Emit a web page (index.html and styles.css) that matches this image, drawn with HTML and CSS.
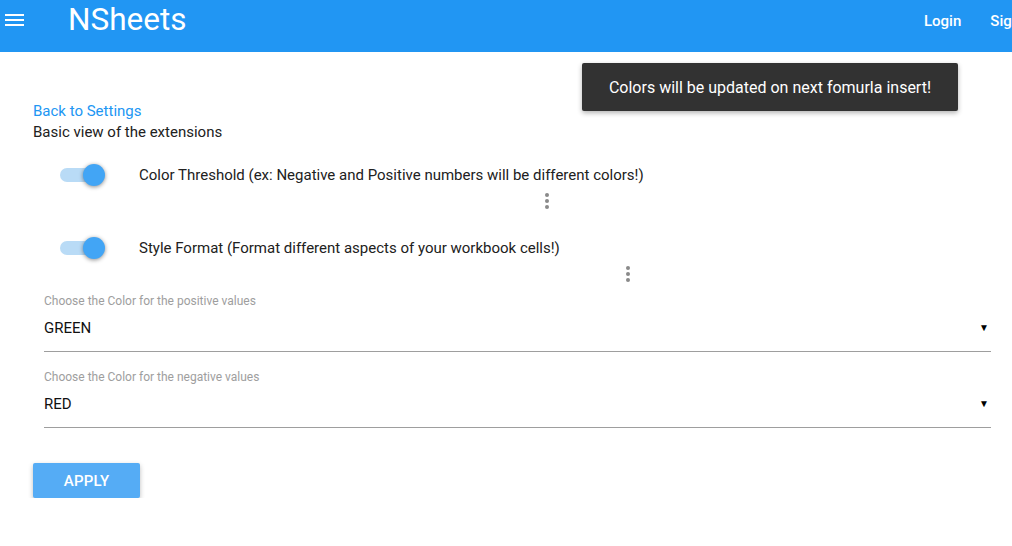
FILE: index.html
```html
<!DOCTYPE html>
<html>
<head>
<meta charset="utf-8">
<link rel="stylesheet" href="styles.css">
</head>
<body>
<header class="topbar">
  <div class="menu-btn" aria-label="menu">
    <svg width="19" height="14" viewBox="0 0 19 14"><rect x="0" y="1" width="19" height="2" fill="#fff"/><rect x="0" y="6" width="19" height="2" fill="#fff"/><rect x="0" y="11" width="19" height="2" fill="#fff"/></svg>
  </div>
  <div class="brand">NSheets</div>
  <nav class="nav">
    <a class="nav-link">Login</a>
    <a class="nav-link">Sign up</a>
  </nav>
</header>

<div class="toast">Colors will be updated on next fomurla insert!</div>

<main class="content">
  <a class="back-link">Back to Settings</a>
  <p class="subtitle">Basic view of the extensions</p>

  <div class="ext-row">
    <span class="switch"><span class="track"></span><span class="thumb"></span></span>
    <span class="ext-label">Color Threshold (ex: Negative and Positive numbers will be different colors!)</span>
  </div>
  <div class="dots-row dots-a"><span class="dots"><i></i><i></i><i></i></span></div>

  <div class="ext-row">
    <span class="switch"><span class="track"></span><span class="thumb"></span></span>
    <span class="ext-label">Style Format (Format different aspects of your workbook cells!)</span>
  </div>
  <div class="dots-row dots-b"><span class="dots"><i></i><i></i><i></i></span></div>

  <div class="field">
    <label class="field-label">Choose the Color for the positive values</label>
    <div class="select"><span>GREEN</span><span class="caret">▼</span></div>
  </div>
  <div class="field">
    <label class="field-label">Choose the Color for the negative values</label>
    <div class="select"><span>RED</span><span class="caret">▼</span></div>
  </div>

  <button class="apply">APPLY</button>
</main>
</body>
</html>
```
FILE: styles.css
```css
html, body {
  margin: 0;
  padding: 0;
  background: #fff;
  font-family: Roboto, "Liberation Sans", Arial, sans-serif;
  color: #212121;
  overflow: hidden;
}
.topbar {
  height: 52px;
  background: #2196f3;
  display: flex;
  align-items: center;
  color: #fff;
  white-space: nowrap;
  overflow: hidden;
}
.menu-btn {
  flex: none;
  width: 19px;
  height: 14px;
  margin-left: 5px;
  margin-top: -12px;
  display: flex;
}
.brand {
  flex: none;
  width: 856px;
  margin-left: 44px;
  font-size: 31.5px;
  line-height: 1;
  margin-top: -12px;
}
.nav {
  flex: none;
  display: flex;
  gap: 29px;
  margin-top: -10px;
}
.nav-link {
  font-size: 15px;
  font-weight: 500;
  color: #fff;
}
.toast {
  position: absolute;
  left: 582px;
  top: 63px;
  width: 376px;
  height: 48px;
  background: #323232;
  color: #fff;
  border-radius: 2px;
  font-size: 16px;
  display: flex;
  align-items: center;
  justify-content: center;
  box-shadow: 0 2px 5px rgba(0,0,0,0.3);
}
.content {
  padding: 48px 21px 0 33px;
  display: flex;
  flex-direction: column;
}
.back-link {
  color: #2196f3;
  font-size: 15px;
  line-height: 22px;
  align-self: flex-start;
}
.subtitle {
  margin: -1px 0 0;
  font-size: 15px;
  line-height: 22px;
}
.ext-row {
  display: flex;
  align-items: center;
  height: 30px;
  margin-top: 17px;
}
.dots-row + .ext-row { margin-top: 24px; }
.switch {
  position: relative;
  width: 40px;
  height: 14px;
  margin-left: 27px;
  flex: none;
}
.track {
  position: absolute;
  left: 0;
  top: 0;
  width: 36px;
  height: 14px;
  border-radius: 7px;
  background: #b9dbf6;
}
.thumb {
  position: absolute;
  left: 23px;
  top: -4px;
  width: 22px;
  height: 22px;
  border-radius: 50%;
  background: #42a5f5;
  box-shadow: 0 1px 4px rgba(0,0,0,0.45);
}
.ext-label {
  margin-left: 39px;
  font-size: 15px;
}
.dots-row {
  height: 16px;
  display: flex;
  margin-top: 3px;
}
.dots-a { padding-left: 512px; }
.dots-b { padding-left: 593px; }
.dots {
  display: flex;
  flex-direction: column;
  gap: 2px;
}
.dots i {
  display: block;
  width: 4px;
  height: 4px;
  border-radius: 50%;
  background: #8a8a8a;
}
.field {
  margin-left: 11px;
  display: flex;
  flex-direction: column;
}
.ext-row + .dots-row + .field { margin-top: 12px; }
.field + .field { margin-top: 18px; }
.field-label {
  font-size: 12px;
  line-height: 14px;
  color: #9e9e9e;
}
.select {
  display: flex;
  justify-content: space-between;
  align-items: center;
  line-height: 18px;
  margin-top: 11px;
  padding-bottom: 14px;
  font-size: 15px;
  color: #111;
  border-bottom: 1px solid #9e9e9e;
}
.caret {
  font-size: 10px;
  color: #000;
  margin-right: 2px;
}
.apply {
  align-self: flex-start;
  margin-top: 35px;
  width: 107px;
  height: 35px;
  border: none;
  border-radius: 2px;
  background: #55acf5;
  color: #fff;
  font-family: Roboto, "Liberation Sans", Arial, sans-serif;
  font-size: 15px;
  font-weight: 500;
  letter-spacing: 0.2px;
  box-shadow: 0 2px 5px rgba(0,0,0,0.26);
}
```
